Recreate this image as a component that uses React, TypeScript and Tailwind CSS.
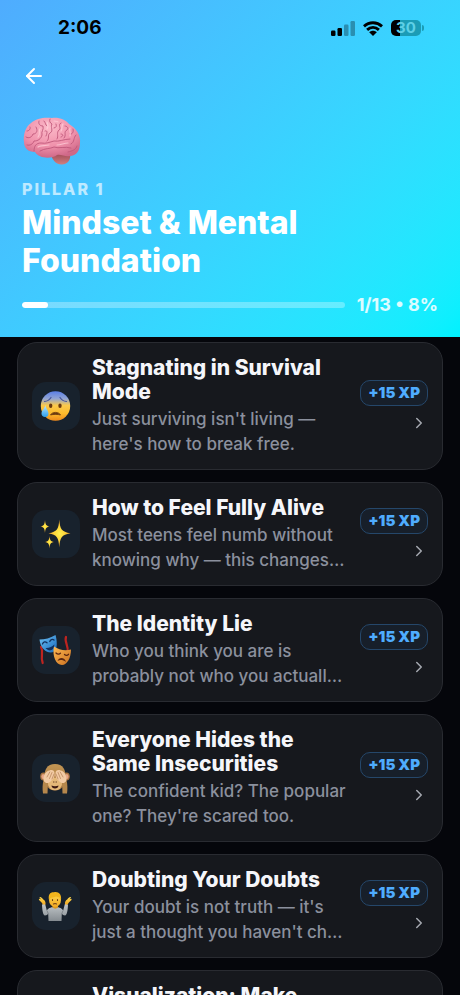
import type { ReactNode } from "react";
import { ArrowLeft, ChevronRight } from "lucide-react";

function BrainIcon() {
  return (
    <svg viewBox="0 0 58 48" className="w-[58px] h-12" aria-hidden="true">
      <defs>
        <radialGradient id="brain" cx="0.45" cy="0.25" r="0.75">
          <stop offset="0" stopColor="#fbb9c8" />
          <stop offset="0.6" stopColor="#f092ac" />
          <stop offset="1" stopColor="#cf6888" />
        </radialGradient>
        <linearGradient id="stem" x1="0" y1="0" x2="0" y2="1">
          <stop offset="0" stopColor="#9c4552" />
          <stop offset="1" stopColor="#d07f80" />
        </linearGradient>
      </defs>
      <path d="M28 38C31 35 44 34 47 37C48 43 45 47 39 47.500C34 48 30 44 28 38Z" fill="url(#stem)" />
      <path
        d="M1 25C0 19 2 10 8 6C13 1 22 0 29 1C36 0 43 3 46 7C53 11 58 18 57 26C57 34 53 39 47 39C42 40 38 37 34 38C29 42 16 42 12 35C5 35 1 31 1 25Z"
        fill="url(#brain)"
      />
      <g fill="none" stroke="#c0587a" strokeWidth="0.900" strokeLinecap="round">
        <path d="M11 34C11 29 13 26 18 26C23 27 27 25 31 24C36 25 41 22 47 22" />
        <path d="M17 34C22 31 27 32 31 30C36 32 42 29 48 31" />
        <path d="M3 20C6 22 9 20 10 17C14 17 15 13 13 10" />
        <path d="M4 28C7 29 10 27 11 24C15 24 18 22 19 18C18 14 21 13 20 9C17 9 15 7 16 4" />
        <path d="M24 24C27 22 24 18 27 16C31 14 27 10 29 7C27 6 26 4 27 2" />
        <path d="M34 22C36 19 33 16 36 13C39 11 34 8 38 6" />
        <path d="M41 21C44 18 40 15 44 13C46 11 44 9 42 9" />
        <path d="M48 27C52 25 50 21 53 18M47 17C49 18 51 15 50 12M45 35C49 34 53 33 54 29M7 10C8 12 6 14 4 14" />
        <path d="M21 4C23 6 22 8 24 9M31 11C33 11 34 9 33 7M22 14C24 13 25 15 23 19M38 17C40 17 41 19 38 20" />
      </g>
      <g fill="none" stroke="#ffd3dc" strokeWidth="1.200" strokeLinecap="round" opacity="0.700">
        <path d="M17 12C15 14 18 16 15 20M24 5C25 7 25 10 24 12M31 4C33 4 35 4 35 5M40 7C38 9 40 11 38 14M47 11C46 14 48 14 47 19M15 30C17 28 22 29 26 28M34 28C38 28 41 26 45 26" />
      </g>
    </svg>
  );
}

function AnxiousFace() {
  return (
    <>
      <defs>
        <linearGradient id="face" x1="0" y1="0" x2="0" y2="1">
          <stop offset="0" stopColor="#5a7fe8" />
          <stop offset="0.25" stopColor="#92a4d2" />
          <stop offset="0.48" stopColor="#fbc94c" />
          <stop offset="0.75" stopColor="#fdbb2c" />
          <stop offset="1" stopColor="#ee8a1c" />
        </linearGradient>
        <linearGradient id="drop" x1="0" y1="0" x2="0" y2="1">
          <stop offset="0" stopColor="#bfeaff" />
          <stop offset="1" stopColor="#2da0ee" />
        </linearGradient>
      </defs>
      <circle cx="15.500" cy="16" r="14.700" fill="url(#face)" />
      <path d="M4.500 11.500C7 11.300 9.500 9.800 11 7.500M26.500 11.500C24 11.300 21.500 9.800 20 7.500" fill="none" stroke="#46549a" strokeWidth="1.200" strokeLinecap="round" />
      <ellipse cx="10.700" cy="15.700" rx="1.700" ry="2.300" fill="#6b3a10" />
      <ellipse cx="20" cy="15.700" rx="1.700" ry="2.300" fill="#6b3a10" />
      <path d="M10.500 25C12 21.500 19 21.500 20.500 25C18 24.200 13 24.200 10.500 25Z" fill="#6b3a10" stroke="#6b3a10" strokeWidth="0.800" strokeLinejoin="round" />
      <path d="M5.300 15C6 19 8.500 20.500 8.500 23.500C8.500 26 7 27 5 27C3 27 1.500 25.700 1.500 23.500C1.500 20.500 4.500 19 5.300 15Z" fill="url(#drop)" />
    </>
  );
}

function Sparkles() {
  return (
    <>
      <defs>
        <radialGradient id="star">
          <stop offset="0" stopColor="#fff04d" />
          <stop offset="0.5" stopColor="#fdd23a" />
          <stop offset="1" stopColor="#ee9d2b" />
        </radialGradient>
      </defs>
      <g fill="url(#star)">
        <path d="M19.300 1.500C20 11 21.500 13.800 30.500 15.300C21.500 16.800 20 19.500 19.300 29.500C18.600 19.500 17.100 16.800 8.500 15.300C17.100 13.800 18.600 11 19.300 1.500Z" />
        <path d="M5 2C5.400 6.500 6 7.800 9.500 8.500C6 9.200 5.400 10.500 5 15C4.600 10.500 4 9.200 0.500 8.500C4 7.800 4.600 6.500 5 2Z" />
        <path d="M9.500 18C9.900 22.200 10.500 23.300 14 24C10.500 24.700 9.900 25.800 9.500 30.500C9.100 25.800 8.500 24.700 5 24C8.500 23.300 9.100 22.200 9.500 18Z" />
      </g>
    </>
  );
}

function Masks() {
  return (
    <>
      <defs>
        <linearGradient id="comedy" x1="0" y1="0" x2="1" y2="1">
          <stop offset="0" stopColor="#70c3f5" />
          <stop offset="1" stopColor="#1769bd" />
        </linearGradient>
        <linearGradient id="tragedy" x1="0" y1="0" x2="1" y2="1">
          <stop offset="0" stopColor="#ffb951" />
          <stop offset="1" stopColor="#c96f20" />
        </linearGradient>
      </defs>
      <path d="M1 13C4 18 0 22 2.700 29M26 3C24 8 29 12 27.500 18" fill="none" stroke="#bd2420" strokeWidth="2.200" strokeLinecap="round" />
      <path d="M-0.500 5.500C5 5.500 10 4 15.500 1C17 6 18 15 14 17.500C10 20.500 0.500 17 -0.500 5.500Z" fill="url(#comedy)" />
      <path d="M2.500 10C3.500 7.500 5.500 7.500 7 8.800M9.800 7.500C10.500 5.500 12.500 4.800 14 6" fill="none" stroke="#102f5d" strokeWidth="1.300" strokeLinecap="round" />
      <path d="M5.500 14C9 14.300 12 13 14.300 10.500C14.500 16.500 9 18.500 5.500 14Z" fill="#102f5d" />
      <path d="M14 12.500C19 16 25 17 31 15.500C31 24 27 31 22 31C16 31 12 22 14 12.500Z" fill="url(#tragedy)" />
      <path d="M16 19C17.500 20.500 19.500 20.500 20.500 19.200M24.500 20.500C26 22 27.500 21.500 28.500 20.300" fill="none" stroke="#5a2611" strokeWidth="1.300" strokeLinecap="round" />
      <path d="M17.500 27C19 22.500 25 23 26 28C23 25.800 20 25.500 17.500 27Z" fill="#5a2611" />
    </>
  );
}

function Monkey() {
  return (
    <>
      <defs>
        <linearGradient id="fur" x1="0" y1="0" x2="0" y2="1">
          <stop offset="0" stopColor="#c39553" />
          <stop offset="1" stopColor="#a57540" />
        </linearGradient>
      </defs>
      <ellipse cx="3.500" cy="14.500" rx="3.300" ry="4" fill="#a77340" />
      <ellipse cx="26.500" cy="14.500" rx="3.300" ry="4" fill="#a77340" />
      <ellipse cx="3.200" cy="14.500" rx="1.800" ry="2.600" fill="#e7a486" />
      <ellipse cx="26.800" cy="14.500" rx="1.800" ry="2.600" fill="#e7a486" />
      <path d="M15 2C23 2 26 8 25.500 16C25 24 21 28.500 15 28.500C9 28.500 5 24 4.500 16C4 8 7 2 15 2Z" fill="url(#fur)" />
      <ellipse cx="15" cy="22" rx="7" ry="6.300" fill="#e5b878" />
      <path d="M11.500 23.500C13.500 24.500 16.500 24.500 18.500 23.500C18.500 27.500 11.500 27.500 11.500 23.500Z" fill="#3e1b13" />
      <path d="M13.500 20H14M16 20H16.500" stroke="#5f3820" strokeWidth="1" strokeLinecap="round" />
      <path d="M3.500 18L8 19.500L7.500 31.500H3C2.300 27 2.500 22 3.500 18ZM26.500 18L22 19.500L22.500 31.500H27C27.700 27 27.500 22 26.500 18Z" fill="#b5874c" />
      <path d="M3.500 18C3 13 6 9 9.500 8.500C12 7.500 14.500 8.500 14.500 11C15 14 14 17 11.500 18.500C9.500 21.500 5 22.500 3.500 18Z" fill="#f2cba4" />
      <path d="M26.500 18C27 13 24 9 20.500 8.500C18 7.500 15.500 8.500 15.500 11C15 14 16 17 18.500 18.500C20.500 21.500 25 22.500 26.500 18Z" fill="#f2cba4" />
      <path d="M7 15L9.800 10M9.500 16.500L12 10.500M12 17L14 12M23 15L20.200 10M20.500 16.500L18 10.500M18 17L16 12" stroke="#b57e55" strokeWidth="0.700" strokeLinecap="round" />
    </>
  );
}

function Shrug() {
  return (
    <>
      <defs>
        <linearGradient id="shirt" x1="0" y1="0" x2="0" y2="1">
          <stop offset="0" stopColor="#c4c9cc" />
          <stop offset="1" stopColor="#858c91" />
        </linearGradient>
        <linearGradient id="skin" x1="0" y1="0" x2="0" y2="1">
          <stop offset="0" stopColor="#ffda4d" />
          <stop offset="1" stopColor="#f2a925" />
        </linearGradient>
      </defs>
      <path d="M2 14.500L5 13.500L6.800 20.500C8.500 17.500 12 17 15 17C18 17 21.500 17.500 23.200 20.500L25 13.500L28 14.500C27.800 20 27 25.500 25 25.500C23.500 25.500 22.300 24.500 21.800 23.500L21.500 31H8.500L8.200 23.500C7.700 24.500 6.500 25.500 5 25.500C3 25.500 2.200 20 2 14.500Z" fill="url(#shirt)" />
      <path d="M7 20.500L8.300 24M23 20.500L21.700 24" stroke="#70777c" strokeWidth="0.700" />
      <path d="M2.800 14.500C1.800 12 0.500 11.500 -1 10C-1.500 8.500 0 8.300 1.200 9.500L-0.500 7.500C0 6.300 2 7.700 3.300 9.500C5 10.500 5.800 12 5.500 14.500Z" fill="url(#skin)" />
      <path d="M27.700 14.500C28.700 12 30 11.500 31.500 10C32 8.500 30.500 8.300 29.300 9.500L31 7.500C30.500 6.300 28.500 7.700 27.200 9.500C25.500 10.500 24.700 12 25 14.500Z" fill="url(#skin)" />
      <path d="M12.500 14H18V17.500C16.500 19 14 19 12.500 17.500Z" fill="#dc981f" />
      <ellipse cx="15" cy="10" rx="6" ry="7" fill="url(#skin)" />
      <path d="M9 10C8 4.500 10 2 14 2.200C18 1 22 4 21 10C20.500 8 19 6.800 16 6.500C13 7.800 10 7 9 10Z" fill="#f3b51d" />
      <path d="M12.500 9.500V10.500M17.500 9.500V10.500M13.500 14C14.500 13.300 15.500 13.300 16.500 14" fill="none" stroke="#704015" strokeWidth="1.100" strokeLinecap="round" />
    </>
  );
}

type Lesson = { title: string; description: string; icon: ReactNode };

const LESSONS: Lesson[] = [
  { title: "Stagnating in Survival Mode", description: "Just surviving isn't living — here's how to break free.", icon: <AnxiousFace /> },
  { title: "How to Feel Fully Alive", description: "Most teens feel numb without knowing why — this changes…", icon: <Sparkles /> },
  { title: "The Identity Lie", description: "Who you think you are is probably not who you actuall…", icon: <Masks /> },
  { title: "Everyone Hides the Same Insecurities", description: "The confident kid? The popular one? They're scared too.", icon: <Monkey /> },
  { title: "Doubting Your Doubts", description: "Your doubt is not truth — it's just a thought you haven't ch…", icon: <Shrug /> },
  { title: "Visualization: Make Success Familiar", description: "See it clearly first, then go and live it for real.", icon: <Sparkles /> },
];

function StatusBar() {
  return (
    <div className="flex items-center justify-between pl-[58px] pr-9 pt-3.5">
      <span className="text-[19px] leading-7 font-bold text-black">2:06</span>
      <div className="flex items-center gap-2">
        <svg viewBox="0 0 24 16" className="w-6 h-4" aria-hidden="true">
          <rect x="0" y="10.500" width="4.500" height="5.500" rx="1.200" />
          <rect x="6.500" y="8" width="4.500" height="8" rx="1.200" />
          <g opacity="0.3">
            <rect x="13" y="4.500" width="4.500" height="11.500" rx="1.200" />
            <rect x="19.500" y="1" width="4.500" height="15" rx="1.200" />
          </g>
        </svg>
        <svg viewBox="0 0 20 15" className="w-5 h-[15px]" aria-hidden="true">
          <path d="M1 5.400C6.200 0.600 13.800 0.600 19 5.400M4.100 8.900C7.600 5.700 12.400 5.700 15.900 8.900" fill="none" stroke="#000" strokeWidth="2.900" />
          <path d="M10 15L6.200 11.200C8.300 9.200 11.700 9.200 13.800 11.200Z" />
        </svg>
        <div className="flex items-center gap-px">
          <div className="flex w-[30px] h-4 items-center justify-center rounded-[5px] bg-linear-to-r from-black from-30% to-[#1b9cb6] to-30%">
            <span className="text-[15px] leading-4 font-bold text-[#5ed0e6]">30</span>
          </div>
          <div className="w-0.5 h-1.5 rounded-r-full bg-[#1b9cb6]" />
        </div>
      </div>
    </div>
  );
}

function Header({ done, total }: { done: number; total: number }) {
  const percent = Math.round((done / total) * 100);
  return (
    <header className="shrink-0 bg-linear-135 from-[#4facfe] to-[#00f2fe] pb-5">
      <StatusBar />
      <div className="px-[22px] pt-[22px]">
        <button type="button" aria-label="Back" className="block text-white">
          <ArrowLeft size={24} strokeWidth={2} />
        </button>
        <div className="mt-[29px] pl-px">
          <BrainIcon />
        </div>
        <p className="mt-3.5 text-base leading-5 font-extrabold tracking-[2px] text-white/65">PILLAR 1</p>
        <h1 className="mt-[5px] text-[32px] leading-[38px] font-extrabold text-white">Mindset &amp; Mental Foundation</h1>
        <div className="mt-[13px] flex items-center gap-3">
          <div
            role="progressbar"
            aria-label="Pillar progress"
            aria-valuenow={percent}
            className="h-1.5 flex-1 overflow-hidden rounded-full bg-white/30"
          >
            <div className="h-full rounded-full bg-white" style={{ width: `${percent}%` }} />
          </div>
          <span className="text-lg leading-6 font-bold text-white/85">
            {done}/{total} • {percent}%
          </span>
        </div>
      </div>
    </header>
  );
}

function LessonCard({ lesson }: { lesson: Lesson }) {
  return (
    <a href="#" className="flex items-center gap-3 rounded-[20px] border border-[#292b31] bg-[#16181d] px-3.5 py-3">
      <div className="flex size-12 shrink-0 items-center justify-center rounded-[14px] bg-[#18222d]">
        <svg viewBox="0 0 32 32" className="size-8 overflow-visible" aria-hidden="true">
          {lesson.icon}
        </svg>
      </div>
      <div className="min-w-0 flex-1 pt-px">
        <h2 className="text-[21px] leading-6 font-extrabold text-[#f5f6fa]">{lesson.title}</h2>
        <p className="mt-[3px] text-[17px] leading-[25px] font-medium text-[#8b909d]">{lesson.description}</p>
      </div>
      <div className="flex shrink-0 flex-col items-end gap-2">
        <span className="rounded-[10px] border border-[#25476a] bg-[#171f2a] px-[7px] text-[15px] leading-6 font-black text-[#4facfe]">
          +15 XP
        </span>
        <ChevronRight size={18} strokeWidth={2} className="text-[#a5a8b0]" />
      </div>
    </a>
  );
}

export default function App() {
  return (
    <div className="flex h-screen flex-col overflow-hidden bg-[#05060b] font-['Inter',sans-serif]">
      <Header done={1} total={13} />
      <main className="flex min-h-0 flex-1 flex-col gap-3 overflow-y-auto px-[17px] pt-[5px] [scrollbar-width:none] *:shrink-0">
        {LESSONS.map(lesson => (
          <LessonCard key={lesson.title} lesson={lesson} />
        ))}
      </main>
    </div>
  );
}
